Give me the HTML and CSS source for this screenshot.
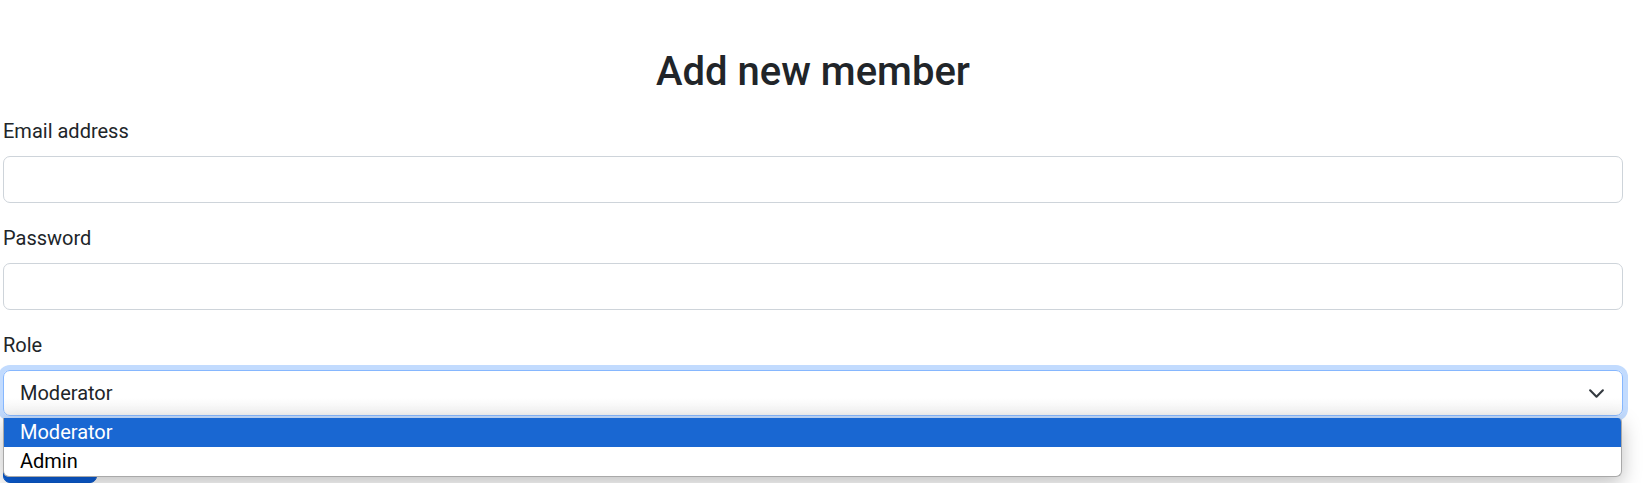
FILE: index.html
```html
<!DOCTYPE html>
<html lang="en">
<head>
<meta charset="utf-8">
<title>Add new member</title>
<link rel="stylesheet" href="styles.css">
</head>
<body>
<main class="page">
  <h2 class="title">Add new member</h2>
  <form class="form">
    <div class="field">
      <label class="label" for="email">Email address</label>
      <input class="control" id="email" type="email">
    </div>
    <div class="field">
      <label class="label" for="password">Password</label>
      <input class="control" id="password" type="password">
    </div>
    <div class="field field-select">
      <label class="label">Role</label>
      <div class="select is-focused">
        <span class="select-value">Moderator</span>
        <svg class="chevron" viewBox="0 0 16 16" width="17" height="17" aria-hidden="true">
          <path d="m2 5 6 6 6-6" fill="none" stroke="#343a40" stroke-width="2" stroke-linecap="round" stroke-linejoin="round"/>
        </svg>
      </div>
      <ul class="dropdown">
        <li class="option is-selected">Moderator</li>
        <li class="option">Admin</li>
      </ul>
    </div>
    <button class="btn" type="button">Submit</button>
  </form>
</main>
</body>
</html>
```

FILE: styles.css
```css
* {
  box-sizing: border-box;
}

html, body {
  margin: 0;
  background: #ffffff;
}

body {
  font-family: Roboto, "Noto Sans", "Liberation Sans", sans-serif;
  font-size: 20px;
  line-height: 30px;
  color: #212529;
  overflow: hidden;
}

.page {
  padding: 48px 20px 0 3px;
}

.title {
  margin: 0 0 20px;
  text-align: center;
  font-size: 40px;
  line-height: 48px;
  font-weight: 500;
  color: #212529;
}

.form {
  display: flex;
  flex-direction: column;
}

.field {
  display: flex;
  flex-direction: column;
  margin-bottom: 20px;
}

.field-select {
  position: relative;
}

.label {
  display: block;
  margin-bottom: 10px;
  line-height: 30px;
}

.control {
  display: block;
  width: 100%;
  height: 47px;
  margin: 0;
  padding: 0 15px;
  font: inherit;
  color: #212529;
  background: #ffffff;
  border: 1px solid #ced4da;
  border-radius: 7px;
  outline: none;
}

.select {
  display: flex;
  align-items: center;
  justify-content: space-between;
  height: 46px;
  padding: 0 17px 0 16px;
  background: linear-gradient(to bottom, #ffffff 0%, #ffffff 60%, #f3f3f3 100%);
  border: 1px solid #86b7fe;
  border-radius: 7px;
  box-shadow: 0 0 0 5px rgba(13, 110, 253, 0.25);
}

.select-value {
  line-height: 30px;
}

.chevron {
  display: block;
}

.dropdown {
  position: absolute;
  left: 0;
  right: 1px;
  top: 100%;
  margin: 2px 0 0;
  padding: 0;
  list-style: none;
  background: #ffffff;
  border: 1px solid #a9a9a9;
  border-top: none;
  border-radius: 0 4px 6px 6px;
  box-shadow: 0 6px 20px rgba(0, 0, 0, 0.26);
  overflow: hidden;
  z-index: 10;
}

.option {
  height: 29px;
  line-height: 29px;
  padding-left: 16px;
  color: #000000;
}

.option.is-selected {
  background: #1967d2;
  color: #ffffff;
}

.btn {
  align-self: flex-start;
  width: 94px;
  height: 47px;
  font: inherit;
  color: #ffffff;
  background: #0b5ed7;
  border: 1px solid #0a58ca;
  border-radius: 7px;
}
```
